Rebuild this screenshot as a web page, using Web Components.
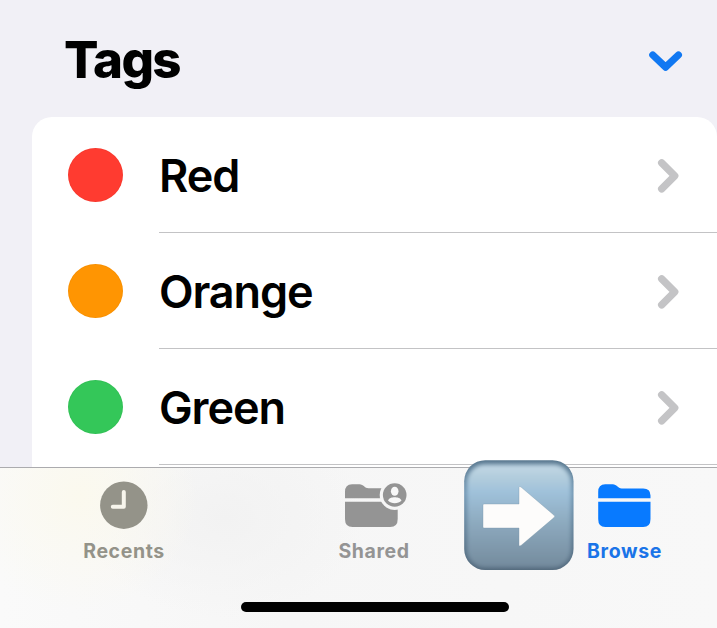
<!DOCTYPE html>
<html lang="en">
<head>
<meta charset="utf-8">
<title>Tags</title>
<style>
html, body { margin: 0; width: 717px; height: 628px; overflow: hidden; background: #f1f0f6; }
body { font-family: Inter, "Liberation Sans", sans-serif; color: #000; }
</style>
</head>
<body>
<files-screen>
  <section-header>Tags</section-header>
  <tag-list>
    <tag-row style="--tag:#ff3b30">Red</tag-row>
    <tag-row style="--tag:#ff9502">Orange</tag-row>
    <tag-row style="--tag:#34c759">Green</tag-row>
  </tag-list>
  <tab-bar slot="bar">
    <tab-item icon="clock" style="width:248px; --tint:#949389; --gap:#f7f5ec">Recents</tab-item>
    <tab-item icon="shared" style="width:252px">Shared</tab-item>
    <tab-item icon="folder" style="width:249px; --tint:#1a74e8">Browse</tab-item>
  </tab-bar>
</files-screen>
<script>
const define = (name, html, setup) => customElements.define(name, class extends HTMLElement {
  constructor() {
    super();
    this.attachShadow({ mode: 'open' }).innerHTML = html;
  }
  connectedCallback() { if (setup) setup(this); }
});

define('files-screen', `<style>
:host { display: grid; grid-template: 467px 161px / 717px; width: 717px; height: 628px; overflow: hidden; background: #f1f0f6; }
main { min-height: 0; overflow: hidden; display: flex; flex-direction: column; }
</style><main><slot></slot></main><slot name="bar"></slot>`);

define('section-header', `<style>
:host { display: flex; flex: none; align-items: center; justify-content: space-between; height: 117px; box-sizing: border-box; padding: 2px 33px 0 64px; font-size: 51px; font-weight: 800; line-height: 60px; letter-spacing: -1.7px; }
svg { display: block; margin-top: 5px; }
</style><span><slot></slot></span>
<svg width="36" height="24" viewBox="0 0 36 24"><path d="M4.8 5 17.6 17.2 30.4 5" fill="none" stroke="#1178f2" stroke-width="7.2" stroke-linecap="round" stroke-linejoin="round"/></svg>`);

define('tag-list', `<style>
:host { display: flex; flex: none; flex-direction: column; margin-left: 32px; height: 370px; background: #fff; border-radius: 20px 20px 0 0; }
</style><slot></slot>`);

define('tag-row', `<style>
:host { display: flex; flex: none; height: 116px; padding-left: 36px; font-size: 45px; font-weight: 600; line-height: 56px; letter-spacing: -1.1px; }
i { width: 55px; height: 54px; margin-top: 31px; border-radius: 50%; background: var(--tag); box-shadow: inset 0 0 0 1px #00000008; }
div { flex: 1; margin-left: 36px; display: flex; align-items: center; justify-content: space-between; box-sizing: border-box; padding-right: 37px; border-bottom: 1px solid #c3c3c5; }
span { margin-top: 3px; }
svg { display: block; margin-top: 2px; }
</style><i></i><div><span><slot></slot></span>
<svg width="23" height="36" viewBox="0 0 23 36"><path d="M4.7 4.8 17.7 17.8 4.7 30.8" fill="none" stroke="#c4c4c6" stroke-width="7.4" stroke-linecap="round" stroke-linejoin="round"/></svg></div>`);

define('tab-bar', `<style>
:host { display: flex; position: relative; box-sizing: border-box; border-top: 1px solid #ababae;
  background: radial-gradient(ellipse 120px 115px at 80px 28px, #fbf9ee, #fbfaf300), radial-gradient(ellipse 140px 100px at 225px 50px, #f2f2f2, #f4f4f400), linear-gradient(90deg, #fafafa, #f6f6f6 40%, #f8f8f8); }
b { position: absolute; left: 241px; top: 134px; width: 268px; height: 10px; border-radius: 5px; background: #000; }
arrow-badge { position: absolute; left: 464px; top: -8px; }
</style><slot></slot><arrow-badge></arrow-badge><b></b>`);

const icons = {
  clock: `<circle cx="35.8" cy="27.2" r="23.7" fill="var(--tint)"/><path d="M35.8 14V28.7H24.8" fill="none" stroke="var(--gap)" stroke-width="4" stroke-linecap="round" stroke-linejoin="round"/>`,
  shared: `<g fill="#949494"><path d="M7 20.3V14Q7 6.3 14 6.3H21.5C25.6 6.3 26.5 10.3 30.5 10.3H52V20.3Z"/><path d="M7 23.7H59.7V41Q59.7 49 52.2 49H14.5Q7 49 7 41Z"/></g><circle cx="56.7" cy="17" r="15" fill="#f6f6f6"/><circle cx="56.7" cy="17" r="11.8" fill="#949494"/><ellipse cx="56.7" cy="13.3" rx="3.8" ry="4.5" fill="#f8f8f8"/><path d="M50 22.6C51 19.8 54 19.2 56.7 19.2S62.5 19.8 63.5 22.6C61.8 24.4 59.4 25.2 56.7 25.2S51.8 24.4 50 22.6Z" fill="#f8f8f8"/>`,
  folder: `<g fill="#087aff" transform="translate(-.8 0)"><path d="M10 20.2V14Q10 6.3 17 6.3H24.5C28.6 6.3 29.5 10.4 33.5 10.4H55Q62.3 10.4 62.3 17.5V20.2Z"/><path d="M10 23.8H62.3V41Q62.3 49 55 49H17Q10 49 10 41Z"/></g>`
};

define('tab-item', `<style>
:host { display: flex; flex: none; flex-direction: column; align-items: center; box-sizing: border-box; padding-top: 10px; font-size: 19.5px; font-weight: 700; line-height: 24px; letter-spacing: 0.6px; color: var(--tint, #949494); }
svg { display: block; flex: none; }
span { margin-top: 6px; }
</style><svg width="72" height="55" viewBox="0 0 72 55"></svg><span><slot></slot></span>`,
  el => { el.shadowRoot.querySelector('svg').innerHTML = icons[el.getAttribute('icon')]; });

define('arrow-badge', `<style>
:host { display: block; width: 110px; height: 111px; }
svg { display: block; }
</style><svg width="110" height="111" viewBox="0 0 110 111">
<defs>
<linearGradient id="edge" x2="0" y2="1"><stop offset="0" stop-color="#58778e"/><stop offset=".3" stop-color="#7196b2"/><stop offset="1" stop-color="#506679"/></linearGradient>
<linearGradient id="face" x2="0" y2="1"><stop offset="0" stop-color="#c3d8e5"/><stop offset=".12" stop-color="#b3cddd"/><stop offset=".27" stop-color="#9fc1da"/><stop offset=".55" stop-color="#8eabc0"/><stop offset="1" stop-color="#748b9d"/></linearGradient>
<filter id="soft" x="-10%" y="-10%" width="120%" height="120%"><feGaussianBlur stdDeviation="2"/></filter>
<clipPath id="tile"><rect x=".2" y=".2" width="109.3" height="109.8" rx="21"/></clipPath>
</defs>
<g clip-path="url(#tile)"><rect width="110" height="111" fill="url(#edge)"/><rect x="3" y="4.5" width="104" height="103" rx="18" fill="url(#face)" filter="url(#soft)"/></g>
<path d="M20 44H55V27.5Q55 25.7 57 27L90 55.2Q91.3 56.4 90 57.6L57 85.5Q55 86.7 55 85V68H20Q19 68 19 67V45Q19 44 20 44Z" fill="#fdfcfb" stroke="#7994a7" stroke-opacity=".45" stroke-width=".8"/>
</svg>`);
</script>
</body>
</html>
